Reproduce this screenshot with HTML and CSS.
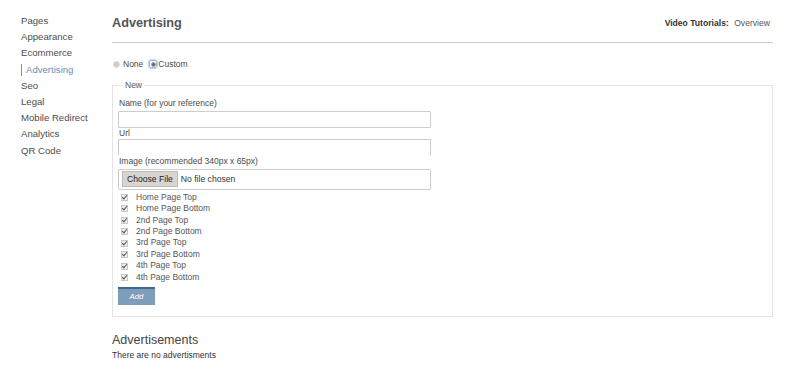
FILE: index.html
```html
<!DOCTYPE html>
<html lang="en">

<head>
    <meta charset="UTF-8">
    <title>Advertising</title>
    <link rel="stylesheet" href="styles.css">
</head>

<body>
    <div class="layout">
        <ul class="sidebar">
            <li>Pages</li>
            <li>Appearance</li>
            <li>Ecommerce</li>
            <li class="active">Advertising</li>
            <li>Seo</li>
            <li>Legal</li>
            <li>Mobile Redirect</li>
            <li>Analytics</li>
            <li>QR Code</li>
        </ul>

        <div class="main">
            <div class="header">
                <h1>Advertising</h1>
                <div class="tutorials"><b>Video Tutorials:</b> <span>Overview</span></div>
            </div>

            <div class="mode">
                <span class="radio"></span>
                <span class="mode-label">None</span>
                <span class="focus"><span class="radio checked"></span></span>
                <span class="mode-label">Custom</span>
            </div>

            <fieldset class="new-ad">
                <legend>New</legend>
                <div class="field-label first">Name (for your reference)</div>
                <div class="text-input gap"></div>
                <div class="field-label">Url</div>
                <div class="text-input open"></div>
                <div class="field-label">Image (recommended 340px x 65px)</div>
                <div class="file-input">
                    <span class="file-btn">Choose File</span>
                    <span class="file-name">No file chosen</span>
                </div>

                <ul class="positions">
                    <li><span class="check"></span>Home Page Top</li>
                    <li><span class="check"></span>Home Page Bottom</li>
                    <li><span class="check"></span>2nd Page Top</li>
                    <li><span class="check"></span>2nd Page Bottom</li>
                    <li><span class="check"></span>3rd Page Top</li>
                    <li><span class="check"></span>3rd Page Bottom</li>
                    <li><span class="check"></span>4th Page Top</li>
                    <li><span class="check"></span>4th Page Bottom</li>
                </ul>

                <div class="add-btn">Add</div>
            </fieldset>

            <h2>Advertisements</h2>
            <p class="empty">There are no advertisments</p>
        </div>
    </div>
</body>

</html>
```

FILE: styles.css
```css
body {
    margin: 0;
    padding: 0;
    background-color: #fff;
    font-family: "Liberation Sans", Arial, sans-serif;
    color: #4a4a4a;
}

.layout {
    display: flex;
}

/* ------------------Sidebar------------------- */
.sidebar {
    list-style: none;
    margin: 0;
    padding: 13px 0 0 21px;
    width: 91px;
    flex-shrink: 0;
}

.sidebar li {
    font-size: 9.6px;
    line-height: 16.2px;
    color: #4d4d4d;
    white-space: nowrap;
}

.sidebar li.active {
    color: #6d8fb3;
    border-left: 1px solid #6d8fb3;
    padding-left: 4px;
    line-height: 12px;
    margin: 2px 0 2.2px;
}

/* ------------------Main------------------- */
.main {
    width: 661px;
}

.header {
    display: flex;
    justify-content: space-between;
    align-items: center;
    height: 18px;
    padding: 14px 0 10px;
    border-bottom: 1px solid #cfcfcf;
}

h1 {
    margin: 0;
    font-size: 12.7px;
    font-weight: bold;
    color: #555;
}

.tutorials {
    font-size: 8.6px;
    color: #555;
    padding-right: 3px;
}

.tutorials b {
    color: #333;
    margin-right: 3px;
}

.mode {
    display: flex;
    align-items: center;
    height: 12px;
    margin-top: 15px;
    font-size: 8.5px;
    color: #4a4a4a;
}

.radio {
    width: 5px;
    height: 5px;
    border-radius: 50%;
    background-color: #ccc;
    border: 1px solid #ddd;
    margin: 0 3px 0 1px;
}

.focus {
    display: flex;
    align-items: center;
    justify-content: center;
    width: 6px;
    height: 6px;
    margin: 0 1px 0 6px;
    border: 1px solid #9dbbd8;
    border-radius: 2px;
    box-shadow: 0 0 0 1px #c6d8ea;
}

.radio.checked {
    width: 3px;
    height: 3px;
    background-color: #666;
    border: 1px solid #aaa;
    margin: 0;
}

/* ------------------New advertisement------------------- */
.new-ad {
    margin: 9px 0 0;
    padding: 6px 0 11px 5px;
    border: 1px solid #e4e4e4;
    min-width: 0;
}

.new-ad legend {
    font-size: 8.5px;
    line-height: 12px;
    padding: 0 2px;
    margin-left: 5px;
    color: #555;
}

.field-label {
    font-size: 8.5px;
    line-height: 11px;
    padding-left: 1px;
    color: #4a4a4a;
}

.field-label.first {
    margin-top: 0.5px;
}

.text-input {
    width: 311px;
    height: 15px;
    border: 1px solid #cdcdcd;
    border-radius: 1px;
    background-color: #fff;
}

.text-input.gap {
    margin-top: 2px;
}

.text-input.open {
    border-bottom-color: transparent;
}

.file-input {
    display: flex;
    align-items: center;
    width: 311px;
    height: 19px;
    margin-top: 2px;
    border: 1px solid #cdcdcd;
    border-radius: 1px;
    font-size: 8.6px;
}

.file-btn {
    margin-left: 3px;
    height: 14px;
    line-height: 14px;
    padding: 0 4px;
    background-color: #d8d4cf;
    border: 1px solid #bfbab4;
    color: #222;
}

.file-name {
    margin-left: 3px;
    color: #333;
}

.positions {
    list-style: none;
    margin: 2.3px 0 0;
    padding: 0;
}

.positions li {
    display: flex;
    align-items: center;
    font-size: 8.5px;
    line-height: 11.43px;
    height: 11.43px;
    color: #555;
}

.check {
    position: relative;
    width: 5px;
    height: 5px;
    margin: 0 8px 0 3px;
    border: 1px solid #c8c8c8;
    background-color: #eee;
}

.check::after {
    content: "";
    position: absolute;
    left: 1px;
    top: -1px;
    width: 2px;
    height: 4px;
    border-right: 1px solid #555;
    border-bottom: 1px solid #555;
    transform: rotate(40deg);
}

.add-btn {
    width: 37px;
    height: 16px;
    margin-top: 4.3px;
    border-top: 2px solid #3b6993;
    background-color: #7d9dbb;
    color: #fff;
    font-size: 7.8px;
    line-height: 16px;
    text-align: center;
    font-style: italic;
}

/* ------------------Advertisements------------------- */
h2 {
    margin: 15.5px 0 0;
    font-size: 12.5px;
    line-height: 15px;
    font-weight: normal;
    color: #444;
}

.empty {
    margin: 2px 0 0;
    font-size: 8.5px;
    line-height: 11px;
    color: #333;
}
```
